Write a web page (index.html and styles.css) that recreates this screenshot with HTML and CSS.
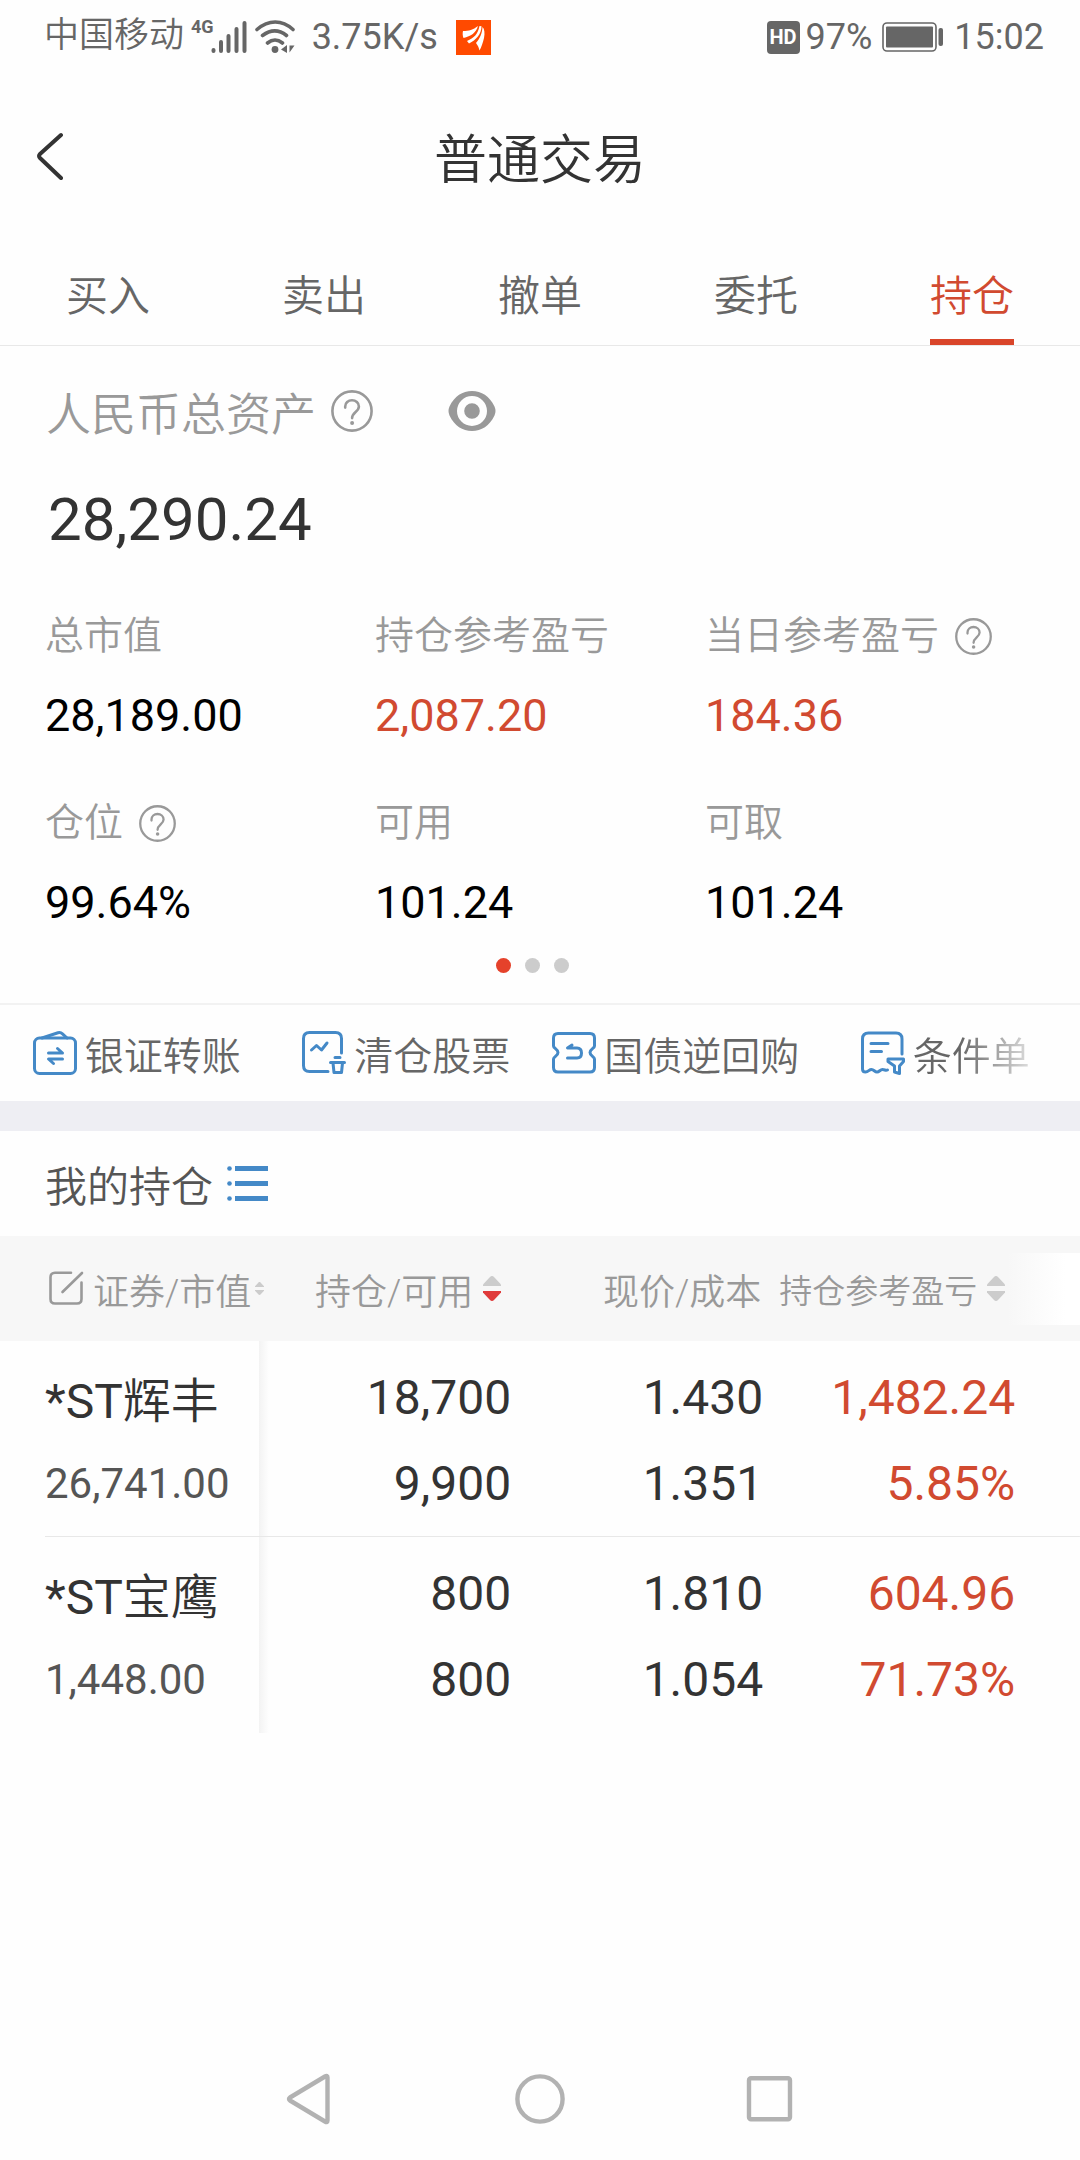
FILE: index.html
```html
<!DOCTYPE html>
<html lang="zh-CN">
<head>
<meta charset="utf-8">
<meta name="viewport" content="width=device-width">
<title>普通交易</title>
<link rel="stylesheet" href="styles.css">
</head>
<body>
<svg class="defs" width="0" height="0" aria-hidden="true">
  <symbol id="help" viewBox="0 0 42 42">
    <circle cx="21" cy="21" r="19.6" fill="none" stroke="currentColor" stroke-width="2.6"/>
    <path d="M14.2 17.6v-1.2c0-3.6 3-6.2 6.8-6.2s6.9 2.6 6.9 6.3c0 5.200-6.800 6-6.800 11.600" fill="none" stroke="currentColor" stroke-width="2.600" stroke-linecap="round"/>
    <circle cx="21.100" cy="33" r="2" fill="currentColor"/>
  </symbol>
  <symbol id="up" viewBox="0 0 18 10"><path d="M9 0c.8 0 1.400.3 2 .9L18 8.500V10H0V8.500L7 .9C7.600.3 8.200 0 9 0z" fill="currentColor"/></symbol>
  <symbol id="down" viewBox="0 0 18 10"><path d="M9 10c.8 0 1.400-.3 2-.9L18 1.500V0H0v1.500l7 7.600c.6.6 1.200.9 2 .9z" fill="currentColor"/></symbol>
</svg>

<div class="status">
  <div class="status-side">
    <span class="carrier">中国移动</span>
    <span class="net">4G</span>
    <svg class="signal" width="36" height="34" viewBox="0 0 36 34" fill="none" stroke="currentColor" stroke-width="4" stroke-linecap="round"><path d="M2.500 30v1M10 22v9M17.500 16v15M25.500 9v22M33.500 3v28"/></svg>
    <svg class="wifi" width="40" height="34" viewBox="0 0 40 34" fill="none" stroke="currentColor" stroke-width="3.600" stroke-linecap="round"><path d="M2 9.500C13.500-.5 27-.5 38 9.500M7.500 15.500c8-6 16.500-6 24 0M12.500 23c5-4 10-4 15 0"/><circle cx="20" cy="29.500" r="3.400" fill="currentColor" stroke="none"/><path d="M32 25v8l-6-3.500zM34 25v8M34.500 25.500h5l-5 7z" fill="currentColor" stroke="none"/></svg>
    <span class="speed">3.75K/s</span>
    <svg width="35" height="35" viewBox="0 0 35 35"><path fill="#ff4a00" d="M0 0h35v35H0z"/><path fill="#fff" d="M7 11c6 0 10-1 15-5-2 7-7 10-14.500 12C6.500 15.500 6.500 13 7 11zM11 21c7-3 11-7 12.500-15l2 .2C25.500 14 20 20 13 23.500zM20 23c4-5 6-9 6.500-16 2 2 2.500 6 1.500 11-1 4-2.500 9-4.500 12.500-.5-2.500-1.500-5-3.500-7.500z"/></svg>
  </div>
  <div class="status-side">
    <span class="hd">HD</span>
    <span class="percent">97%</span>
    <svg class="battery" width="62" height="30" viewBox="0 0 62 30"><rect x="1" y="1" width="53" height="28" rx="4" fill="none" stroke="currentColor" stroke-width="1.600"/><rect x="4" y="4.500" width="47" height="21" rx="1" fill="currentColor"/><rect x="56.500" y="6" width="4.500" height="18" rx="2" fill="currentColor"/></svg>
    <span>15:02</span>
  </div>
</div>

<header class="header">
  <button class="back" aria-label="返回"><svg width="28" height="48" viewBox="0 0 28 48" fill="none" stroke="currentColor" stroke-width="4" stroke-linecap="round" stroke-linejoin="round"><path d="M25 3 4 22q-2 2 0 4l21 20"/></svg></button>
  <h1 class="title">普通交易</h1>
</header>

<nav class="tabs">
  <a class="tab" href="#buy">买入</a>
  <a class="tab" href="#sell">卖出</a>
  <a class="tab" href="#cancel">撤单</a>
  <a class="tab" href="#orders">委托</a>
  <a class="tab active" href="#positions" aria-current="page">持仓</a>
</nav>

<main>
  <section class="assets">
    <div class="total-label">
      <span>人民币总资产</span>
      <button class="icon-button" aria-label="说明"><svg width="42" height="42"><use href="#help"/></svg></button>
      <button class="icon-button eye" aria-label="隐藏金额"><svg width="48" height="40" viewBox="0 0 48 40"><path fill="currentColor" fill-rule="evenodd" d="M24 0c9.500 0 17.500 5 22.500 15.500q2 4.500 0 9C41.500 35 33.500 40 24 40S6.500 35 1.500 24.500q-2-4.500 0-9C6.500 5 14.500 0 24 0zm0 5a15 15 0 1 0 0 30 15 15 0 1 0 0-30zm0 7.200a7.800 7.800 0 1 1 0 15.600 7.800 7.800 0 1 1 0-15.600z"/></svg></button>
    </div>
    <div class="total">28,290.24</div>
    <dl class="stats">
      <div class="stat"><dt>总市值</dt><dd>28,189.00</dd></div>
      <div class="stat"><dt>持仓参考盈亏</dt><dd class="gain">2,087.20</dd></div>
      <div class="stat"><dt>当日参考盈亏<button class="icon-button" aria-label="说明"><svg width="37" height="37"><use href="#help"/></svg></button></dt><dd class="gain">184.36</dd></div>
      <div class="stat"><dt>仓位<button class="icon-button" aria-label="说明"><svg width="37" height="37"><use href="#help"/></svg></button></dt><dd>99.64%</dd></div>
      <div class="stat"><dt>可用</dt><dd>101.24</dd></div>
      <div class="stat"><dt>可取</dt><dd>101.24</dd></div>
    </dl>
    <div class="dots"><i class="dot on"></i><i class="dot"></i><i class="dot"></i></div>
  </section>

  <nav class="actions">
    <a class="action" href="#transfer">
      <svg width="44" height="44" viewBox="0 0 44 44" fill="none" stroke="currentColor" stroke-width="3" stroke-linecap="round" stroke-linejoin="round"><rect x="1.500" y="7" width="41" height="35.500" rx="5"/><path d="M9 7 25 1.800q2.500-.8 4.500 1L34 7"/><path d="M15.500 22h14l-5-4.500M29.500 28h-14l5 4.500"/></svg>
      <span>银证转账</span>
    </a>
    <a class="action" href="#closed">
      <svg width="44" height="44" viewBox="0 0 44 44" fill="none" stroke="currentColor" stroke-width="3" stroke-linecap="round" stroke-linejoin="round"><path d="M39.500 22V7.500q0-6-6-6h-26q-6 0-6 6v27q0 6 6 6H26M9.500 19l5-4.500 5 4.500 5.500-7"/><path d="M33 26.500h5M28.500 31.500h14M31 32l1 9.500h7.500L40.500 32"/></svg>
      <span>清仓股票</span>
    </a>
    <a class="action" href="#repo">
      <svg width="44" height="44" viewBox="0 0 44 44" fill="none" stroke="currentColor" stroke-width="3" stroke-linecap="round" stroke-linejoin="round"><path d="M6 2.500h32q4.500 0 4.500 4.500v8c0 2.500-4.500 3-4.500 6.500s4.500 4 4.500 6.500v8.500q0 4.500-4.500 4.500H6q-4.500 0-4.500-4.500V28C1.500 25.500 6 25 6 21.500S1.500 17.500 1.500 15V7q0-4.500 4.500-4.500z"/><path d="m20 14-4.500 3H25q4.500 0 4.500 5t-4.500 5h-9.500"/></svg>
      <span>国债逆回购</span>
    </a>
    <a class="action" href="#conditional">
      <svg width="44" height="44" viewBox="0 0 44 44" fill="none" stroke="currentColor" stroke-width="3" stroke-linecap="round" stroke-linejoin="round"><path d="M41 23V8q0-6-6-6H7.500q-6 0-6 6v30q0 3 3 3c3 0 3.500-2.500 6-2.500s3 2.500 5.500 2.500 3-2.500 5.500-2.500 3 1.500 5 .5M10 12.500h17M10 20.500h10.500"/><path d="M27 28h15.500v2.500l-4 4.500v7.500l-5-1.500v-6L27 30.500z"/></svg>
      <span>条件单</span>
    </a>
  </nav>

  <section class="holdings">
    <div class="holdings-head">
      <h2>我的持仓</h2>
      <button class="icon-button list" aria-label="列表"><svg width="42" height="36" viewBox="0 0 42 36" fill="currentColor"><circle cx="2.500" cy="2.500" r="2.300"/><circle cx="2.500" cy="17.500" r="2.300"/><circle cx="2.500" cy="32.500" r="2.300"/><path d="M8 0h33v5H8zM8 15h33v5H8zM8 30h33v5H8z"/></svg></button>
    </div>
    <table class="table">
      <colgroup><col class="col-name"><col><col><col><col class="col-end"></colgroup>
      <thead>
        <tr>
          <th><button class="sort"><svg width="35" height="35" viewBox="0 0 35 35" fill="none" stroke="currentColor" stroke-width="2.600" stroke-linecap="round"><path d="M22 1.800H6q-4.500 0-4.500 4.500V28q0 4.500 4.500 4.500h22q4.500 0 4.500-4.500V11.500M33 2 13.500 21"/></svg><span>证券/市值</span><span class="arrows small"><svg><use href="#up"/></svg><svg><use href="#down"/></svg></span></button></th>
          <th><button class="sort"><span>持仓/可用</span><span class="arrows"><svg><use href="#up"/></svg><svg class="desc"><use href="#down"/></svg></span></button></th>
          <th class="plain"><span>现价/成本</span></th>
          <th><button class="sort"><span class="compact">持仓参考盈亏</span><span class="arrows"><svg><use href="#up"/></svg><svg><use href="#down"/></svg></span></button></th>
          <th><div class="more"></div></th>
        </tr>
      </thead>
      <tbody>
        <tr>
          <td><div class="stock"><div class="name">*ST<span class="han">辉丰</span></div><div class="value">26,741.00</div></div></td>
          <td><div>18,700</div><div>9,900</div></td>
          <td><div>1.430</div><div>1.351</div></td>
          <td class="gain"><div>1,482.24</div><div>5.85%</div></td>
          <td></td>
        </tr>
        <tr>
          <td><div class="stock"><div class="name">*ST<span class="han">宝鹰</span></div><div class="value">1,448.00</div></div></td>
          <td><div>800</div><div>800</div></td>
          <td><div>1.810</div><div>1.054</div></td>
          <td class="gain"><div>604.96</div><div>71.73%</div></td>
          <td></td>
        </tr>
      </tbody>
    </table>
  </section>
</main>

<footer class="system-nav">
  <button class="icon-button" aria-label="返回"><svg width="50" height="54" viewBox="0 0 50 54" fill="none" stroke="currentColor" stroke-width="4.400" stroke-linejoin="round"><path d="M42.500 5.500v43Q42.500 51 40 49.500L5 28.500q-2-1.500 0-3L40 4.500q2.500-1.500 2.500 1z"/></svg></button>
  <button class="icon-button" aria-label="主页"><svg width="50" height="50" viewBox="0 0 50 50" fill="none" stroke="currentColor" stroke-width="4.400"><circle cx="25" cy="25" r="22.600"/></svg></button>
  <button class="icon-button" aria-label="最近任务"><svg width="50" height="50" viewBox="0 0 50 50" fill="none" stroke="currentColor" stroke-width="4.400"><rect x="4" y="4.200" width="41" height="41" rx="2"/></svg></button>
</footer>
</body>
</html>
```

FILE: styles.css
```css
* { box-sizing: border-box; }

body {
  margin: 0;
  min-height: 100vh;
  display: flex;
  flex-direction: column;
  background: #fefefe;
  color: #333;
  font-family: Roboto, "Noto Sans CJK SC", sans-serif;
}

svg { display: block; flex: none; }
.defs { position: absolute; }
h1, h2, dl, dd { margin: 0; font-weight: 400; }
a { color: inherit; text-decoration: none; }
button { margin: 0; padding: 0; border: 0; background: none; color: inherit; font: inherit; }
.gain { color: #d14a30; }
.han { font-weight: 350; }

/* status bar */
.status {
  display: flex;
  justify-content: space-between;
  align-items: center;
  height: 74px;
  padding: 0 36px 0 44px;
  color: #666;
  font-size: 36px;
}
.status-side { display: flex; align-items: center; }
.carrier { font-size: 35px; line-height: 42px; padding-bottom: 2px; font-weight: 350; }
.net { align-self: flex-start; margin-left: 7px; font-size: 18px; line-height: 24px; font-weight: 700; }
.signal { margin-left: -3px; }
.wifi { margin: 0 17px 0 8px; }
.speed { margin-right: 18px; }
.hd {
  width: 33px;
  margin-right: 6px;
  border-radius: 4px;
  background: #666;
  color: #fff;
  font-size: 20px;
  line-height: 33px;
  font-weight: 700;
  text-align: center;
}
.battery { margin: 0 10px; }

/* page header */
.header {
  display: grid;
  grid-template-columns: 1fr auto 1fr;
  align-items: center;
  height: 168px;
  padding: 0 36px 5px;
}
.back { justify-self: start; }
.title { font-size: 53px; font-weight: 350; }

.tabs { display: flex; border-bottom: 1px solid #e8e8e8; color: #666; }
.tab { flex: 1; display: flex; flex-direction: column; align-items: center; padding-top: 6px; font-size: 42px; line-height: 97px; font-weight: 350; }
.tab.active { color: #d14a30; }
.tab.active::after { content: ""; width: 84px; height: 6px; margin-top: -6px; background: #d9452a; }

/* asset summary */
.assets { padding: 36px 45px 30px; }
.icon-button { display: inline-flex; color: #999; }
.total-label { display: flex; align-items: center; gap: 15px; height: 58px; padding-left: 1px; color: #999; font-size: 45px; font-weight: 350; }
.eye { margin-left: 60px; }
.total { padding: 42px 0 38px 3px; font-size: 60px; line-height: 76px; }
.stats { display: grid; grid-template-columns: repeat(3, 1fr); row-gap: 27px; }
.stats dt { display: flex; align-items: center; gap: 16px; color: #999; font-size: 39px; line-height: 80px; font-weight: 350; }
.stats dd { color: #000; font-size: 45px; line-height: 80px; }
.stats .gain { color: #d14a30; }
.dots { display: flex; justify-content: center; gap: 14px; margin: 15px 15px 0 0; }
.dot { width: 15px; height: 15px; border-radius: 50%; background: #ccc; }
.dot.on { background: #e5422b; }

/* shortcuts */
.actions {
  display: grid;
  grid-template-columns: repeat(4, 1fr);
  height: 98px;
  padding-left: 2px;
  border-top: 2px solid #f2f2f2;
  color: #666;
  font-size: 39px;
  font-weight: 350;
}
.action { display: flex; justify-content: center; align-items: center; gap: 8px; white-space: nowrap; }
.action svg { color: #4489c7; }
.action:last-child span { background: linear-gradient(to right, #666 40%, #ddd 100%); background-clip: text; color: transparent; }

/* positions */
.holdings { border-top: 30px solid #eeeef3; }
.holdings-head { display: flex; align-items: center; gap: 14px; height: 105px; padding-left: 45px; }
.holdings-head h2 { color: #555; font-size: 42px; font-weight: 350; }
.list { color: #4489c7; }

.table { width: 100%; table-layout: fixed; border-collapse: collapse; }
.col-name { width: 24%; }
.col-end { width: 6%; }
th { height: 105px; padding: 0; background: #f7f7f7; color: #999; font-size: 36px; font-weight: 350; text-align: right; white-space: nowrap; }
th:first-child { padding-left: 49px; text-align: left; }
th.plain { padding-right: 2px; }
.sort { display: inline-flex; align-items: center; gap: 10px; margin-right: 10px; vertical-align: middle; }
th:first-child .sort { gap: 4px; margin: 0; }
th:first-child .sort > svg { margin-right: 5px; }
.compact { font-size: 33px; }
.arrows { display: grid; gap: 5px; color: #ccc; }
.arrows svg { width: 18px; height: 10px; }
.arrows.small { gap: 3px; }
.arrows.small svg { width: 9px; height: 5px; }
.arrows .desc { color: #e03b3b; }
.more { height: 72px; margin-left: -7px; background: linear-gradient(to right, #f7f7f7, #fff 80%); }

td { height: 196px; padding: 0; vertical-align: top; text-align: right; font-size: 48px; line-height: 86px; }
td > div:first-child { padding-top: 14px; }
td:not(:first-child) { background: linear-gradient(#e8e8e8, #e8e8e8) bottom / 100% 1px no-repeat; }
td:nth-child(2) { background: linear-gradient(#e8e8e8, #e8e8e8) bottom / 100% 1px no-repeat, linear-gradient(to right, #f3f3f3, #fefefe 10px); }
td:first-child { padding-left: 45px; text-align: left; }
.stock { height: 196px; border-bottom: 1px solid #e8e8e8; }
tr:last-child .stock { border: 0; }
tbody tr:last-child td:not(:first-child) { background: none; }
tbody tr:last-child td:nth-child(2) { background: linear-gradient(to right, #f3f3f3, #fefefe 10px); }
.name { line-height: 94px; }
.value { color: #555; font-size: 42px; line-height: 70px; }

/* system navigation */
.system-nav { display: flex; justify-content: center; align-items: center; gap: 180px; height: 122px; margin-top: auto; }
.system-nav .icon-button { color: #b2b2b2; }
```
